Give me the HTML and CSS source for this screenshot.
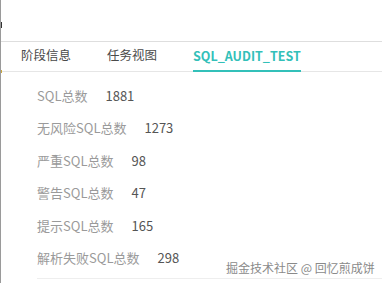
FILE: index.html
```html
<!DOCTYPE html>
<html>
<head>
<meta charset="utf-8">
<link rel="stylesheet" href="styles.css">
</head>
<body>
<div class="frame">
  <div class="mark mark-dark"></div>
  <div class="mark mark-yellow"></div>
  <div class="top"></div>
  <div class="tabs">
    <div class="tab">阶段信息</div>
    <div class="tab">任务视图</div>
    <div class="tab active">SQL_AUDIT_TEST</div>
  </div>
  <div class="list">
    <div class="row"><span class="label">SQL总数</span><span class="num">1881</span></div>
    <div class="row"><span class="label">无风险SQL总数</span><span class="num">1273</span></div>
    <div class="row"><span class="label">严重SQL总数</span><span class="num">98</span></div>
    <div class="row"><span class="label">警告SQL总数</span><span class="num">47</span></div>
    <div class="row"><span class="label">提示SQL总数</span><span class="num">165</span></div>
    <div class="row"><span class="label">解析失败SQL总数</span><span class="num">298</span></div>
  </div>
  <div class="rule"></div>
  <div class="watermark">掘金技术社区 @ 回忆煎成饼</div>
</div>
</body>
</html>
```

FILE: styles.css
```css
html, body {
  margin: 0;
  padding: 0;
  background: #fff;
}
.frame {
  position: relative;
  width: 381px;
  height: 283px;
  border-left: 1px solid #9a9a9a;
  font-family: "Noto Sans CJK SC", "Noto Sans", sans-serif;
  font-size: 13px;
  overflow: hidden;
}
.mark {
  position: absolute;
  left: -1px;
  width: 2px;
}
.mark-dark {
  top: 22px;
  height: 6px;
  background: #333;
}
.mark-yellow {
  top: 70px;
  height: 3px;
  background: #c9a640;
}
.top {
  height: 41px;
  border-bottom: 1px solid #dedede;
}
.tabs {
  display: flex;
  height: 29px;
  padding-left: 20px;
  border-bottom: 1px solid #e6e6e6;
  font-size: 12.5px;
}
.tab {
  display: flex;
  align-items: center;
  margin-right: 36px;
  color: #4a4a4a;
  line-height: 1;
  padding-bottom: 2px;
  box-sizing: border-box;
}
.tab.active {
  color: #33c0b9;
  font-weight: bold;
  border-bottom: 2px solid #33c0b9;
  margin-bottom: -1px;
  padding-bottom: 0;
  padding-top: 1px;
}
.list {
  padding-top: 7px;
  padding-left: 36px;
}
.row {
  display: flex;
  align-items: center;
  height: 32.5px;
  gap: 18px;
}
.label {
  color: #9a9a9a;
}
.num {
  color: #555;
}
.rule {
  margin-top: 4px;
  margin-left: 36px;
  border-top: 1px solid #eeeeee;
}
.watermark {
  position: absolute;
  left: 225px;
  top: 259px;
  font-size: 12px;
  color: #8a8a8a;
  text-shadow: 0 0 2px #fff, 0 0 2px #fff;
  white-space: nowrap;
}
```
